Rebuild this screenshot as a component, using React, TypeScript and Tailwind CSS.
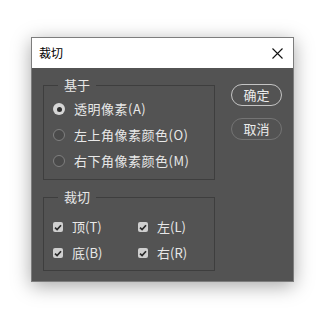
import React from "react";

const font = { fontFamily: '"Noto Sans CJK SC", "Noto Sans", sans-serif' };

function Radio({ checked, label }: { checked?: boolean; label: string }) {
  return (
    <div className="flex h-[26px] items-center">
      {checked ? (
        <span className="flex h-[12px] w-[12px] items-center justify-center rounded-full bg-[#d6d6d6]">
          <span className="h-[5px] w-[5px] rounded-full bg-[#2e2e2e]" />
        </span>
      ) : (
        <span className="h-[12px] w-[12px] rounded-full border border-[#7f7f7f] bg-[#4a4a4a]" />
      )}
      <span className="ml-[9px] text-[13px] leading-[18px] tracking-[0.5px] text-[#e8e8e8]">{label}</span>
    </div>
  );
}

function Check({ label }: { label: string }) {
  return (
    <div className="flex h-[26px] items-center">
      <span className="flex h-[10px] w-[10px] items-center justify-center rounded-[2px] bg-[#cfcfcf]">
        <svg width="8" height="7" viewBox="0 0 8 7">
          <path d="M1 3.6 L3.1 5.6 L7 1.2" fill="none" stroke="#2a2a2a" strokeWidth="1.7" />
        </svg>
      </span>
      <span className="ml-[9px] text-[13px] leading-[18px] text-[#e8e8e8]">{label}</span>
    </div>
  );
}

export default function App() {
  return (
    <div className="h-[317px] w-[322px] bg-white pl-[31px] pt-[37px]" style={font}>
      <div className="flex h-[245px] w-[263px] flex-col border border-[#7d7d7d] shadow-[0_4px_18px_rgba(0,0,0,0.35)]">
        <div className="flex h-[30px] items-center justify-between bg-white pl-[7px] pr-[10px]">
          <span className="text-[12px] leading-[16px] text-black">裁切</span>
          <svg width="11" height="11" viewBox="0 0 11 11">
            <path d="M0.5 0.5 L10.5 10.5 M10.5 0.5 L0.5 10.5" stroke="#111" strokeWidth="1.1" />
          </svg>
        </div>
        <div className="flex flex-1 bg-[#535353] pl-[11px]">
          <div className="flex w-[172px] flex-col">
            <fieldset className="mt-[8px] border border-[#3e3e3e] px-0 pb-[5px] pl-[9px]">
              <legend className="ml-[5px] px-[6px] text-[13px] leading-[18px] text-[#e8e8e8]">基于</legend>
              <div className="flex flex-col pt-[2px]">
                <Radio checked label="透明像素(A)" />
                <Radio label="左上角像素颜色(O)" />
                <Radio label="右下角像素颜色(M)" />
              </div>
            </fieldset>
            <fieldset className="mt-[8px] border border-[#3e3e3e] px-0 pb-[4px] pl-[9px]">
              <legend className="ml-[5px] px-[6px] text-[13px] leading-[18px] text-[#e8e8e8]">裁切</legend>
              <div className="grid grid-cols-[85px_1fr] pt-[8px]">
                <Check label="顶(T)" />
                <Check label="左(L)" />
                <Check label="底(B)" />
                <Check label="右(R)" />
              </div>
            </fieldset>
          </div>
          <div className="ml-[16px] flex flex-col gap-[12px] pt-[16px]">
            <button className="h-[22px] w-[51px] rounded-full border-[1.5px] border-[#c4c4c4] text-[13px] leading-[18px] text-[#ececec]">
              确定
            </button>
            <button className="h-[22px] w-[51px] rounded-full border border-[#747474] text-[13px] leading-[18px] text-[#ececec]">
              取消
            </button>
          </div>
        </div>
      </div>
    </div>
  );
}
